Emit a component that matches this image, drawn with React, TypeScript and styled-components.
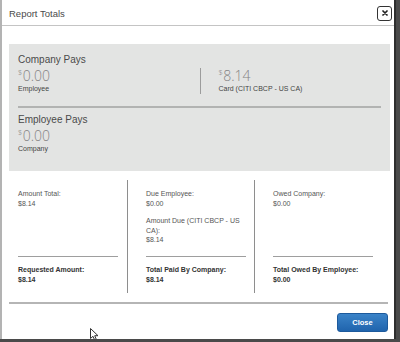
import styled, { createGlobalStyle } from "styled-components";

const GlobalStyle = createGlobalStyle`
  html, body {
    margin: 0;
    padding: 0;
    background: #4a4a4a;
  }
  * {
    box-sizing: border-box;
  }
`;

const summary = [
  {
    title: "Company Pays",
    left: { amount: "0.00", label: "Employee" },
    right: { amount: "8.14", label: "Card (CITI CBCP - US CA)" },
  },
  {
    title: "Employee Pays",
    left: { amount: "0.00", label: "Company" },
  },
];

const columns = [
  {
    groups: [{ label: "Amount Total:", value: "$8.14" }],
    total: { label: "Requested Amount:", value: "$8.14" },
  },
  {
    groups: [
      { label: "Due Employee:", value: "$0.00" },
      { label: "Amount Due (CITI CBCP - US CA):", value: "$8.14" },
    ],
    total: { label: "Total Paid By Company:", value: "$8.14" },
  },
  {
    groups: [{ label: "Owed Company:", value: "$0.00" }],
    total: { label: "Total Owed By Employee:", value: "$0.00" },
  },
];

export default function App() {
  return (
    <>
      <GlobalStyle />
      <Modal>
        <Header>
          <Title>Report Totals</Title>
          <CloseX aria-label="close">
            <svg width="6" height="6" viewBox="0 0 6 6">
              <path d="M1 1L5 5M5 1L1 5" stroke="#222" strokeWidth="1.7" strokeLinecap="round" />
            </svg>
          </CloseX>
        </Header>
        <Body>
          <Panel>
            {summary.map((s, i) => (
              <Section key={s.title} $divided={i > 0}>
                <SectionTitle>{s.title}</SectionTitle>
                <Split>
                  <Half>
                    <Amount>
                      <Dollar>$</Dollar>
                      {s.left.amount}
                    </Amount>
                    <SmallLabel>{s.left.label}</SmallLabel>
                  </Half>
                  {s.right && (
                    <Half $right>
                      <Amount>
                        <Dollar>$</Dollar>
                        {s.right.amount}
                      </Amount>
                      <SmallLabel>{s.right.label}</SmallLabel>
                    </Half>
                  )}
                </Split>
              </Section>
            ))}
          </Panel>

          <Columns>
            {columns.map((c, i) => (
              <Column key={i} $first={i === 0}>
                <ColTop>
                  {c.groups.map((g) => (
                    <Group key={g.label}>
                      <Line>{g.label}</Line>
                      <Line>{g.value}</Line>
                    </Group>
                  ))}
                </ColTop>
                <ColRule />
                <ColBottom>
                  <Line $bold>{c.total.label}</Line>
                  <Line $bold>{c.total.value}</Line>
                </ColBottom>
              </Column>
            ))}
          </Columns>

          <FooterRule />
          <Footer>
            <CloseButton>Close</CloseButton>
          </Footer>
        </Body>
        <Cursor width="9" height="13" viewBox="0 0 9 13">
          <path d="M0.5 0.5V10.5L3 8.3L4.8 12.3L6.4 11.6L4.7 7.7H8L0.5 0.5Z" fill="#fff" stroke="#333" strokeWidth="1" strokeLinejoin="round" />
        </Cursor>
      </Modal>
    </>
  );
}

const Modal = styled.div`
  position: relative;
  width: 396px;
  height: 339px;
  background: #ffffff;
  border-left: 2px solid #b3b3b3;
  border-right: 2px solid #2e2e2e;
  font-family: "Liberation Sans", Arial, sans-serif;
  color: #444;
  display: flex;
  flex-direction: column;
`;

const Header = styled.div`
  height: 26px;
  border-bottom: 1px solid #c4c4c4;
  display: flex;
  align-items: center;
  justify-content: space-between;
  padding: 0 2px 0 7px;
`;

const Title = styled.div`
  font-size: 9.5px;
  color: #4a4a4a;
  margin-top: 1px;
`;

const CloseX = styled.div`
  width: 15px;
  height: 15px;
  border: 1.5px solid #333;
  border-radius: 3px;
  display: flex;
  align-items: center;
  justify-content: center;
  margin-top: 1px;
`;

const Body = styled.div`
  padding: 18px 4px 0 7px;
  display: flex;
  flex-direction: column;
`;

const Panel = styled.div`
  background: #e3e4e3;
  padding: 10px 9px 17px 9px;
`;

const Section = styled.div<{ $divided?: boolean }>`
  ${(p) =>
    p.$divided &&
    `
    border-top: 2px solid #b2b3b2;
    margin-top: 12px;
    padding-top: 6px;
  `}
`;

const SectionTitle = styled.div`
  font-size: 10px;
  line-height: 12px;
  color: #4a4a4a;
  margin-bottom: 2px;
`;

const Split = styled.div`
  display: grid;
  grid-template-columns: 1fr 1fr;
`;

const Half = styled.div<{ $right?: boolean }>`
  display: flex;
  flex-direction: column;
  ${(p) =>
    p.$right &&
    `
    border-left: 1px solid #9c9c9c;
    padding-left: 18px;
  `}
`;

const Amount = styled.div`
  font-size: 14px;
  line-height: 16px;
  height: 16px;
  color: #838383;
  font-family: "Open Sans", "Liberation Sans", sans-serif;
  font-weight: 300;
`;

const Dollar = styled.span`
  font-size: 7.5px;
  line-height: 0;
  position: relative;
  top: -6px;
  margin-right: 0.5px;
`;

const SmallLabel = styled.div`
  font-size: 7px;
  line-height: 10px;
  color: #444;
`;

const Columns = styled.div`
  display: flex;
  margin-top: 9px;
  height: 113px;
`;

const Column = styled.div<{ $first?: boolean }>`
  display: flex;
  flex-direction: column;
  width: ${(p) => (p.$first ? "118px" : "127px")};
  padding: 0 9px 0 ${(p) => (p.$first ? "9px" : "18px")};
  border-left: ${(p) => (p.$first ? "none" : "1px solid #8e8e8e")};
`;

const ColTop = styled.div`
  flex: 1;
  padding-top: 9px;
  display: flex;
  flex-direction: column;
  gap: 8px;
`;

const Group = styled.div`
  display: flex;
  flex-direction: column;
`;

const Line = styled.div<{ $bold?: boolean }>`
  font-size: 7px;
  line-height: 9.5px;
  width: 100px;
  color: ${(p) => (p.$bold ? "#333" : "#555")};
  font-weight: ${(p) => (p.$bold ? 700 : 400)};
`;

const ColRule = styled.div`
  width: 100px;
  height: 1.5px;
  background: #9e9e9e;
`;

const ColBottom = styled.div`
  padding: 8px 0 9px 0;
`;

const FooterRule = styled.div`
  height: 1.5px;
  background: #b5b5b5;
  margin-top: 9px;
  margin-right: 2px;
`;

const Footer = styled.div`
  display: flex;
  justify-content: flex-end;
  padding: 9px 2px 0 0;
`;

const CloseButton = styled.button`
  width: 51px;
  height: 19px;
  border: 1px solid #1d5a9c;
  border-radius: 3px;
  background: linear-gradient(#3a83c8, #2064ad);
  color: #fff;
  font-family: "Liberation Sans", Arial, sans-serif;
  font-size: 7.5px;
  font-weight: 700;
  padding: 0;
`;

const Cursor = styled.svg`
  position: absolute;
  left: 88px;
  top: 328px;
`;
